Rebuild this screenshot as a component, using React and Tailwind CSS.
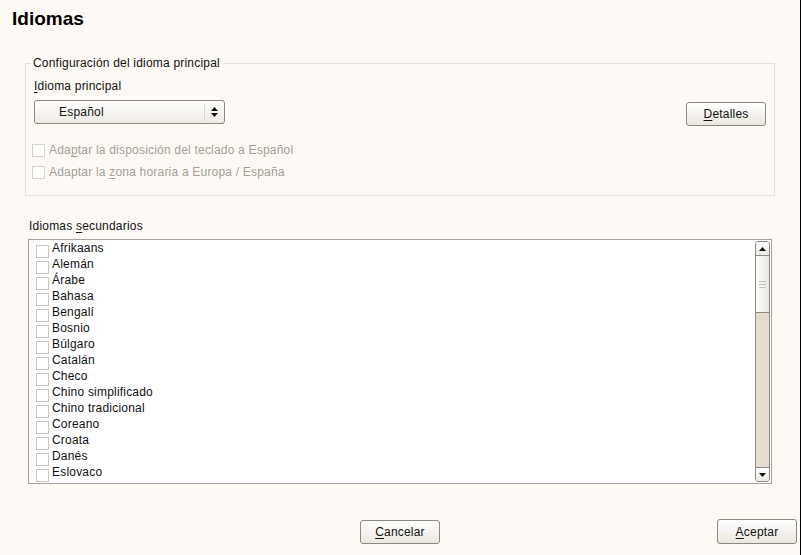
import React from "react";

const items = [
  "Afrikaans", "Alemán", "Árabe", "Bahasa", "Bengalí", "Bosnio", "Búlgaro",
  "Catalán", "Checo", "Chino simplificado", "Chino tradicional", "Coreano",
  "Croata", "Danés", "Eslovaco",
];

function Box({ className = "" }) {
  return (
    <span
      className={
        "block w-[13px] h-[13px] shrink-0 border border-[#c9c6bf] bg-white " +
        className
      }
    />
  );
}

function Btn({ children, className = "" }) {
  return (
    <button
      className={
        "h-[24px] w-[80px] rounded-[3px] border border-[#8b8880] bg-gradient-to-b from-white to-[#ebe7df] text-[12px] leading-[14px] tracking-[0.2px] text-[#111] " +
        className
      }
    >
      {children}
    </button>
  );
}

function U({ children }) {
  return <span className="underline underline-offset-[2px]">{children}</span>;
}

function Tri({ up }) {
  return (
    <svg width="7" height="4" viewBox="0 0 7 4" className="block">
      {up ? (
        <polygon points="0,4 7,4 3.5,0" fill="#111" />
      ) : (
        <polygon points="0,0 7,0 3.5,4" fill="#111" />
      )}
    </svg>
  );
}

export default function App() {
  return (
    <div
      className="w-[801px] h-[555px] bg-[#fdfaf5] border-r border-black flex flex-col text-[12px] leading-[14px] tracking-[0.2px] text-[#111] overflow-hidden"
      style={{ fontFamily: '"Liberation Sans", Arial, sans-serif' }}
    >
      <div className="pl-[12px] pt-[8px] text-[19px] leading-[22px] font-bold tracking-normal text-black">
        Idiomas
      </div>

      <fieldset className="mt-[26px] ml-[25px] w-[750px] border border-[#e3e0d9] pl-[8px] pr-[8px] pt-[9px] pb-[12px]">
        <legend className="ml-[-3px] pl-[2px] pr-[3px] text-[12px] leading-[14px]">
          Configuración del idioma principal
        </legend>
        <div>
          <U>I</U>dioma principal
        </div>
        <div className="flex justify-between items-start mt-[7px]">
          <div className="w-[191px] h-[24px] rounded-[3px] border border-[#8c8982] bg-gradient-to-b from-white to-[#eeebe4] flex items-center">
            <span className="pl-[24px] flex-1">Español</span>
            <span className="w-px h-[17px] bg-[#dcd9d2]" />
            <span className="w-[19px] flex flex-col items-center gap-[2px]">
              <Tri up />
              <Tri />
            </span>
          </div>
          <Btn className="mt-[2px]">
            <U>D</U>etalles
          </Btn>
        </div>
        <div className="mt-[13px] ml-[-2px] text-[#a19e98]">
          <div className="h-[22px] flex items-center gap-[4px]">
            <Box className="border-[#d6d3cc] bg-transparent" />
            <span>
              Ada<U>p</U>tar la disposición del teclado a Español
            </span>
          </div>
          <div className="h-[22px] flex items-center gap-[4px]">
            <Box className="border-[#d6d3cc] bg-transparent" />
            <span>
              Adaptar la <U>z</U>ona horaria a Europa / España
            </span>
          </div>
        </div>
      </fieldset>

      <div className="mt-[23px] pl-[29px]">
        Idiomas <U>s</U>ecundarios
      </div>

      <div className="mt-[6px] ml-[28px] w-[744px] h-[245px] border border-[#a5a29b] bg-white flex">
        <div className="flex-1 overflow-hidden pl-[7px]">
          <div>
            {items.map((t) => (
              <div key={t} className="h-[16px] flex items-start gap-[3px]">
                <Box className="mt-[5px]" />
                <span className="leading-[16px]">{t}</span>
              </div>
            ))}
          </div>
        </div>
        <div className="w-[15px] my-[1px] mr-[1px] flex flex-col border border-[#8e8b84] rounded-[3px] overflow-hidden">
          <div className="h-[14px] border-b border-[#8e8b84] bg-gradient-to-b from-white to-[#ece9e3] flex items-center justify-center">
            <Tri up />
          </div>
          <div className="h-[57px] border-b border-[#8e8b84] bg-gradient-to-r from-white to-[#e9e7e2] flex flex-col items-center justify-center gap-[2px]">
            <span className="block w-[7px] h-px bg-[#c4c1ba]" />
            <span className="block w-[7px] h-px bg-[#c4c1ba]" />
            <span className="block w-[7px] h-px bg-[#c4c1ba]" />
          </div>
          <div className="flex-1 bg-[#e3dccf]" />
          <div className="h-[14px] border-t border-[#8e8b84] bg-gradient-to-b from-white to-[#ece9e3] flex items-center justify-center">
            <Tri />
          </div>
        </div>
      </div>

      <div className="mt-[36px] grid grid-cols-[1fr_auto_1fr] items-start">
        <div />
        <Btn>
          <U>C</U>ancelar
        </Btn>
        <div className="flex justify-end pr-[3px]">
          <Btn className="h-[25px] mt-[-1px] border-[#1c1c1c]">
            <U>A</U>ceptar
          </Btn>
        </div>
      </div>
    </div>
  );
}
